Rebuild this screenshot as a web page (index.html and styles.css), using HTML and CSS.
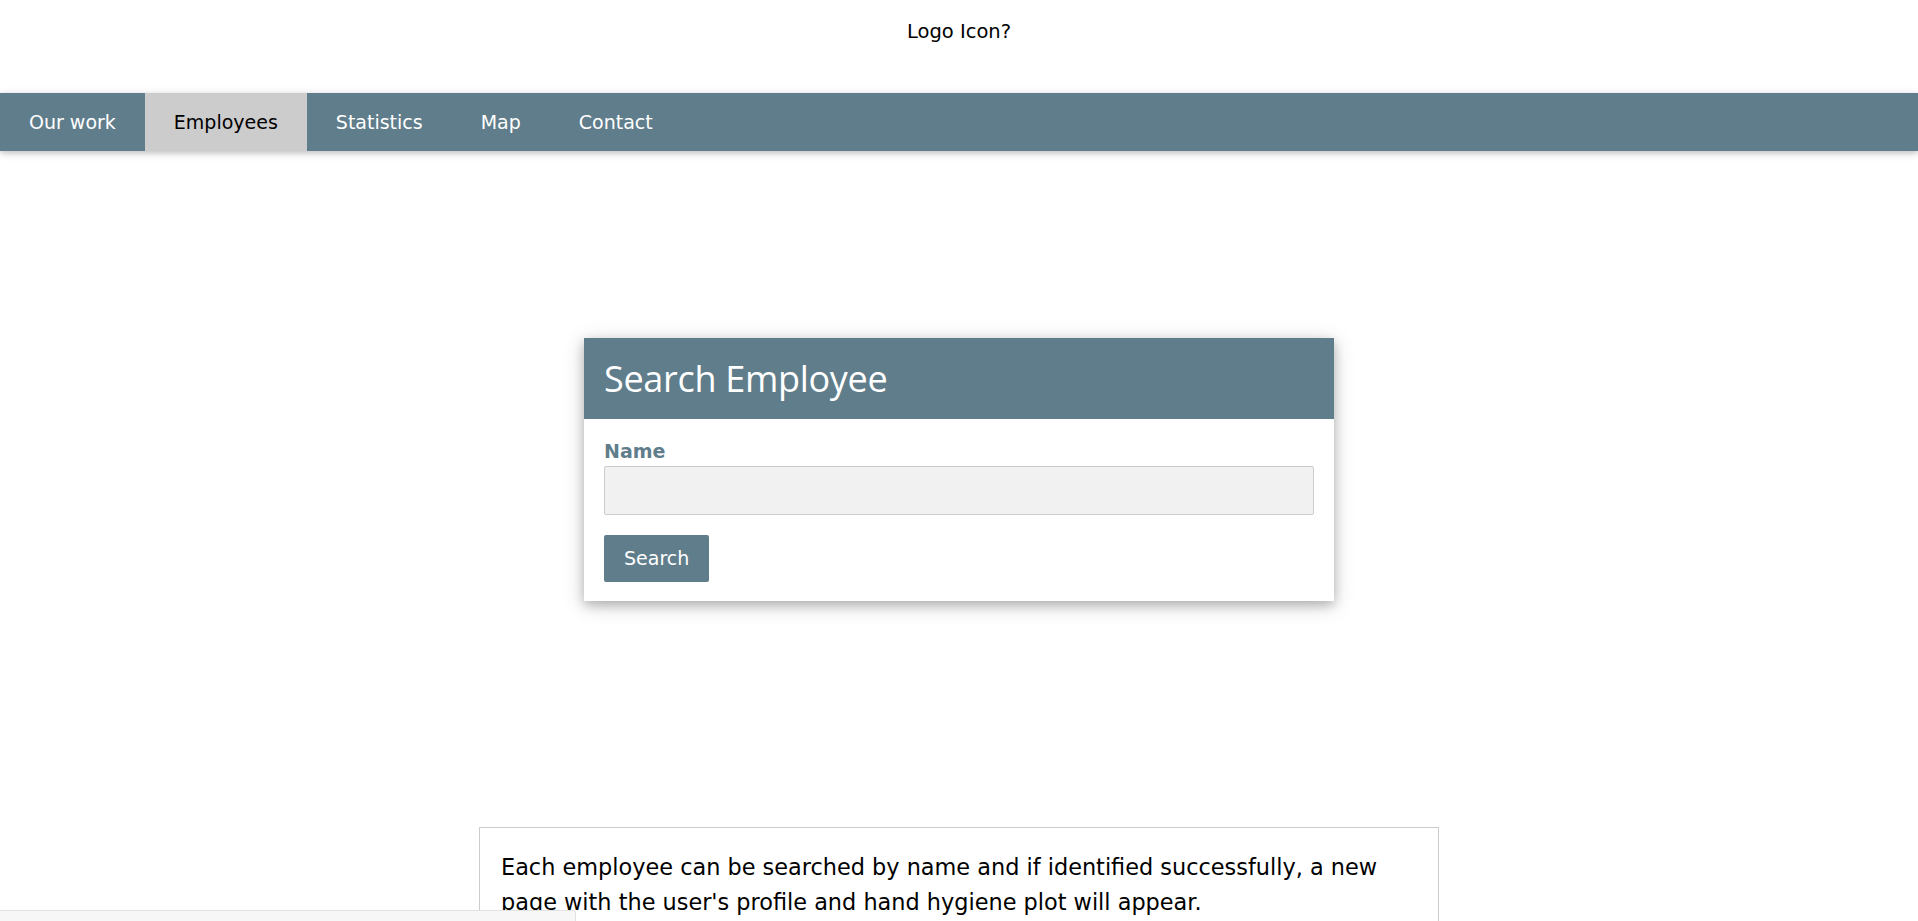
FILE: index.html
```html
<!DOCTYPE html>
<html lang="en">
<head>
<meta charset="utf-8">
<title>Employees</title>
<link rel="stylesheet" href="styles.css">
</head>
<body>
<header class="top">
  <div class="logo">Logo Icon?</div>
</header>
<nav class="nav">
  <a class="nav-item" href="#">Our work</a>
  <a class="nav-item active" href="#">Employees</a>
  <a class="nav-item" href="#">Statistics</a>
  <a class="nav-item" href="#">Map</a>
  <a class="nav-item" href="#">Contact</a>
</nav>
<main class="main">
  <form class="card">
    <div class="card-head"><h2 class="card-title">Search Employee</h2></div>
    <div class="card-body">
      <label class="label" for="name">Name</label>
      <input class="input" id="name" type="text">
      <button class="btn" type="button">Search</button>
    </div>
  </form>
  <section class="info">
    <p class="info-text">Each employee can be searched by name and if identified successfully, a new page with the user's profile and hand hygiene plot will appear.</p>
  </section>
</main>
<div class="status"></div>
</body>
</html>
```
FILE: styles.css
```css
html { scrollbar-width: none; }
html::-webkit-scrollbar { display: none; }
body {
  margin: 0;
  font-family: "DejaVu Sans", Verdana, sans-serif;
  font-size: 19px;
  color: #000;
  background: #fff;
}
.top {
  height: 93px;
  display: flex;
  justify-content: center;
}
.logo {
  padding-top: 20px;
  line-height: 24px;
  font-size: 19.5px;
}
.nav {
  display: flex;
  background: #607d8b;
  height: 58px;
  box-shadow: 0 2px 5px rgba(0,0,0,0.16), 0 2px 10px rgba(0,0,0,0.12);
}
.nav-item {
  display: flex;
  align-items: center;
  padding: 0 29px 0 29px;
  color: #fff;
  text-decoration: none;
  font-size: 19px;
}
.nav-item.active {
  background: #ccc;
  color: #000;
}
.main {
  display: flex;
  flex-direction: column;
  align-items: center;
  padding-top: 187px;
}
.card {
  width: 750px;
  background: #fff;
  box-shadow: 0 4px 10px 0 rgba(0,0,0,0.2), 0 4px 20px 0 rgba(0,0,0,0.19);
  margin: 0;
}
.card-head {
  background: #607d8b;
  height: 81px;
  display: flex;
  align-items: center;
  padding: 0 20px;
}
.card-title {
  margin: 0;
  font-family: "Open Sans", sans-serif;
  font-weight: 400;
  font-size: 36px;
  color: #fff;
  letter-spacing: -0.3px;
}
.card-body {
  padding: 20px 20px 19px;
  display: flex;
  flex-direction: column;
  align-items: flex-start;
}
.label {
  font-weight: bold;
  color: #607d8b;
  line-height: 25px;
  margin-bottom: 2px;
}
.input {
  box-sizing: border-box;
  width: 710px;
  height: 49px;
  background: #f1f1f1;
  border: 1px solid #ccc;
  border-radius: 2px;
  margin: 0 0 20px;
}
.btn {
  background: #607d8b;
  color: #fff;
  border: none;
  border-radius: 2px;
  font-family: "DejaVu Sans", Verdana, sans-serif;
  font-size: 19px;
  line-height: 27px;
  padding: 10px 20px;
}
.info {
  box-sizing: border-box;
  width: 960px;
  margin-top: 226px;
  border: 1px solid #ccc;
  padding: 22px 21px;
}
.info-text {
  margin: 0;
  font-size: 22.4px;
  line-height: 35px;
}
.status {
  position: fixed;
  left: 0;
  bottom: 0;
  width: 575px;
  height: 10px;
  background: #f7f7f7;
  border-top: 1px solid #e2e2e2;
  border-right: 1px solid #e2e2e2;
  border-top-right-radius: 3px;
}
```
